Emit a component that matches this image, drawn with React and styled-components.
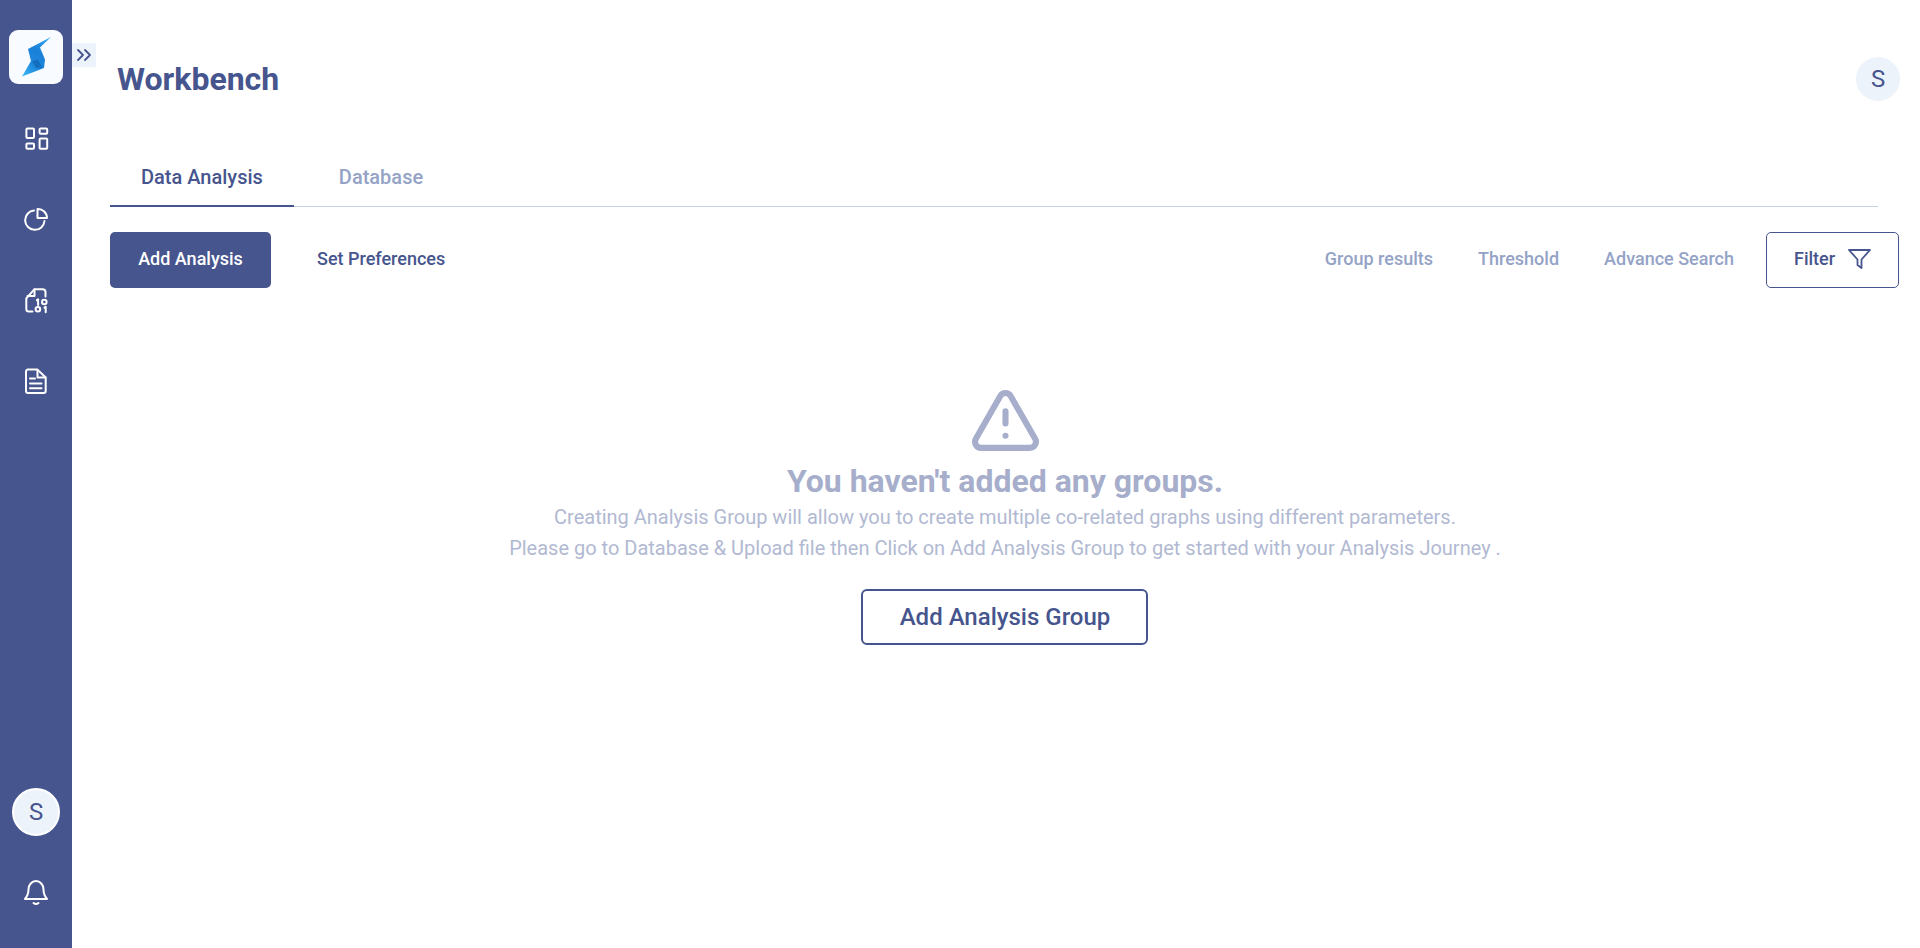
import React from "react";
import styled, { createGlobalStyle } from "styled-components";

const Global = createGlobalStyle`
  html, body { margin: 0; padding: 0; background: #fff; }
  body { font-family: Roboto, "Liberation Sans", sans-serif; }
  * { box-sizing: border-box; }
`;

const Page = styled.div`
  display: flex;
  width: 100%;
  height: 948px;
  overflow: hidden;
`;

const Sidebar = styled.aside`
  position: relative;
  flex: 0 0 72px;
  display: flex;
  flex-direction: column;
  align-items: center;
  padding: 30px 0 45px;
  background: #46558d;
`;

const LogoBox = styled.div`
  width: 54px;
  height: 54px;
  border-radius: 9px;
  background: #f8fbff;
  display: flex;
`;

const Collapse = styled.button`
  position: absolute;
  left: 72px;
  top: 43px;
  width: 24px;
  height: 24px;
  padding: 0;
  border: 0;
  background: #edf3fb;
  display: flex;
  align-items: center;
  justify-content: center;
  color: #46558d;
`;

const Nav = styled.nav`
  display: flex;
  flex-direction: column;
  align-items: center;
  gap: 57px;
  margin-top: 42px;
`;

const Icon = styled.svg`
  display: block;
  width: 24px;
  height: 24px;
  fill: none;
  stroke: currentColor;
  stroke-width: 2;
  stroke-linecap: round;
  stroke-linejoin: round;
  overflow: visible;
  color: #fff;
`;

const Avatar = styled.div`
  display: flex;
  align-items: center;
  justify-content: center;
  border-radius: 50%;
  background: #edf3fb;
  color: #46558d;
  font-weight: 400;
  width: ${(p) => p.$size}px;
  height: ${(p) => p.$size}px;
  font-size: ${(p) => p.$font}px;
`;

const SideAvatar = styled(Avatar)`
  margin-top: auto;
  border: 2px solid #fff;
`;

const BellSlot = styled.div`
  margin-top: 43px;
`;

const Main = styled.main`
  flex: 1;
  min-width: 0;
  display: flex;
  flex-direction: column;
  padding: 57px 20px 0 38px;
`;

const Header = styled.header`
  display: flex;
  align-items: center;
  justify-content: space-between;
  height: 44px;
  padding-left: 7px;
`;

const Title = styled.h1`
  margin: 0;
  font-size: 32px;
  font-weight: 700;
  color: #46558d;
`;

const TabBar = styled.div`
  display: flex;
  gap: 14px;
  height: 57px;
  margin: 49px 22px 0 0;
  border-bottom: 1px solid #c5d2e6;
`;

const Tab = styled.div`
  display: flex;
  align-items: flex-start;
  padding: 17px 31px 0;
  height: 57px;
  font-size: 20px;
  line-height: 20px;
  font-weight: 500;
  color: ${(p) => (p.$active ? "#46558d" : "#94a3c6")};
  border-bottom: ${(p) => (p.$active ? "2px solid #46558d" : "0")};
`;

const Toolbar = styled.div`
  display: flex;
  align-items: center;
  justify-content: space-between;
  margin-top: 25px;
`;

const ToolGroup = styled.div`
  display: flex;
  align-items: center;
`;

const Primary = styled.button`
  width: 161px;
  height: 56px;
  padding: 0 0 3px;
  border: 0;
  border-radius: 5px;
  background: #46558d;
  color: #fff;
  font: 500 18px Roboto, sans-serif;
`;

const TextAction = styled.button`
  height: 56px;
  padding: 0 22.5px 3px;
  border: 0;
  background: none;
  font: 500 18px Roboto, sans-serif;
  color: ${(p) => (p.$muted ? "#94a3c6" : "#46558d")};
`;

const PreferenceAction = styled(TextAction)`
  margin-left: 23.5px;
`;

const FilterButton = styled.button`
  display: flex;
  align-items: center;
  gap: 13px;
  width: 133px;
  height: 56px;
  margin: 0 1px 0 9.5px;
  padding: 0 0 3px 27px;
  border: 1px solid #46558d;
  border-radius: 5px;
  background: #fff;
  color: #46558d;
  font: 500 18px Roboto, sans-serif;
`;

const Empty = styled.section`
  display: flex;
  flex-direction: column;
  align-items: center;
  margin-top: 96px;
`;

const WarnIcon = styled.svg`
  display: block;
  width: 73px;
  height: 73px;
  fill: none;
  stroke: #a6aecb;
  stroke-width: 2;
  stroke-linecap: round;
  stroke-linejoin: round;
  margin-bottom: 3px;
`;

const Heading = styled.h2`
  margin: 0;
  font-size: 32px;
  line-height: 42px;
  font-weight: 700;
  color: #a6aecb;
`;

const Body = styled.p`
  margin: 0;
  font-size: 20px;
  line-height: 31px;
  font-weight: 400;
  color: #b1b9d2;
  text-align: center;
`;

const Outline = styled.button`
  width: 287px;
  height: 56px;
  margin: 25px 2px 0 0;
  padding: 0 0 0 2px;
  border: 2px solid #46558d;
  border-radius: 6px;
  background: #fff;
  color: #46558d;
  font: 500 24px Roboto, sans-serif;
`;

const Logo = () => (
  <svg width="54" height="54" viewBox="0 0 54 54">
    <defs>
      <linearGradient id="boltFill" x1="0.9" y1="0" x2="0.1" y2="1">
        <stop offset="0" stopColor="#35a8ee" />
        <stop offset="0.4" stopColor="#1a80d8" />
        <stop offset="0.7" stopColor="#1f8ade" />
        <stop offset="1" stopColor="#3ab6f2" />
      </linearGradient>
    </defs>
    <polygon points="42,7 31,17.5 36,29.5 35,38 13,46.5 22,31 19,19" fill="url(#boltFill)" />
    <polygon points="23,31 29,29.5 33,37.5 27,38" fill="#0b4f9c" opacity="0.45" />
  </svg>
);

const GridIcon = () => (
  <Icon viewBox="0 0 24 24">
    <rect x="2.4" y="2.4" width="7.6" height="9.6" rx="1" />
    <rect x="15.6" y="2.4" width="7.6" height="5.4" rx="1" />
    <rect x="2.4" y="17.6" width="7.6" height="5.2" rx="1" />
    <rect x="15.6" y="12.6" width="7.6" height="10.2" rx="1" />
  </Icon>
);

const PieIcon = () => (
  <Icon viewBox="0 0 24 24">
    <path d="M10 3.5A9.7 9.7 0 1 0 20.5 14" />
    <path d="M13.5 2A9 9 0 0 1 23 11H13.5Z" />
  </Icon>
);

const BinaryFileIcon = () => (
  <Icon viewBox="0 0 24 24">
    <path d="M8.5 23.5H4.7Q2.3 23.5 2.3 21V10.3L10.5 1.2H18.5Q21.5 1.2 21.5 4V8.5" />
    <path d="M3.5 8H10.5V1.5" />
    <path d="M12.9 12.2L14.1 11.4V17" />
    <circle cx="20.3" cy="14" r="2.3" />
    <circle cx="13.9" cy="21.3" r="2.3" />
    <path d="M20.5 19.7L21.7 18.9V24.3" />
  </Icon>
);

const DocIcon = () => (
  <Icon viewBox="0 0 24 24">
    <path d="M4 .6H13.5L21.7 8.5V22Q21.7 24 19.7 24H4Q2 24 2 22V2.6Q2 .6 4 .6Z" />
    <path d="M13.5 1V8.5H21.5" />
    <path d="M6 9.5H11" />
    <path d="M6 14.5H17.5" />
    <path d="M6 19.3H17.5" />
  </Icon>
);

const BellIcon = () => (
  <Icon viewBox="0 0 24 24">
    <path d="M1 20H23C20.5 17 19.5 15 19.5 10.5A7.5 8.5 0 0 0 4.5 10.5C4.5 15 3.5 17 1 20Z" />
    <path d="M9.5 24Q12 26 14.5 24" />
  </Icon>
);

const FunnelIcon = () => (
  <svg width="23" height="20" viewBox="0 0 23 20" fill="none" stroke="#46558d" strokeWidth="1.8" strokeLinejoin="round">
    <path d="M1 1H22L13.5 10.5V19L9.5 16V10.5Z" />
  </svg>
);

export default function App() {
  return (
    <Page>
      <Global />
      <Sidebar>
        <LogoBox>
          <Logo />
        </LogoBox>
        <Collapse aria-label="Expand">
          <svg width="16" height="14" viewBox="0 0 16 14" fill="none" stroke="currentColor" strokeWidth="1.8" strokeLinecap="round" strokeLinejoin="round">
            <path d="M2 2L7 7L2 12" />
            <path d="M9 2L14 7L9 12" />
          </svg>
        </Collapse>
        <Nav>
          <GridIcon />
          <PieIcon />
          <BinaryFileIcon />
          <DocIcon />
        </Nav>
        <SideAvatar $size={48} $font={24}>S</SideAvatar>
        <BellSlot>
          <BellIcon />
        </BellSlot>
      </Sidebar>
      <Main>
        <Header>
          <Title>Workbench</Title>
          <Avatar $size={44} $font={24}>S</Avatar>
        </Header>
        <TabBar>
          <Tab $active>Data Analysis</Tab>
          <Tab>Database</Tab>
        </TabBar>
        <Toolbar>
          <ToolGroup>
            <Primary>Add Analysis</Primary>
            <PreferenceAction>Set Preferences</PreferenceAction>
          </ToolGroup>
          <ToolGroup>
            <TextAction $muted>Group results</TextAction>
            <TextAction $muted>Threshold</TextAction>
            <TextAction $muted>Advance Search</TextAction>
            <FilterButton>
              Filter
              <FunnelIcon />
            </FilterButton>
          </ToolGroup>
        </Toolbar>
        <Empty>
          <WarnIcon viewBox="0 0 24 24">
            <path d="m21.73 18-8-14a2 2 0 0 0-3.48 0l-8 14A2 2 0 0 0 4 21h16a2 2 0 0 0 1.73-3" />
            <path d="M12 9v4" />
            <path d="M12 17h.01" />
          </WarnIcon>
          <Heading>You haven't added any groups.</Heading>
          <Body>
            Creating Analysis Group will allow you to create multiple co-related graphs using different parameters.
            <br />
            Please go to Database &amp; Upload file then Click on Add Analysis Group to get started with your Analysis Journey .
          </Body>
          <Outline>Add Analysis Group</Outline>
        </Empty>
      </Main>
    </Page>
  );
}
